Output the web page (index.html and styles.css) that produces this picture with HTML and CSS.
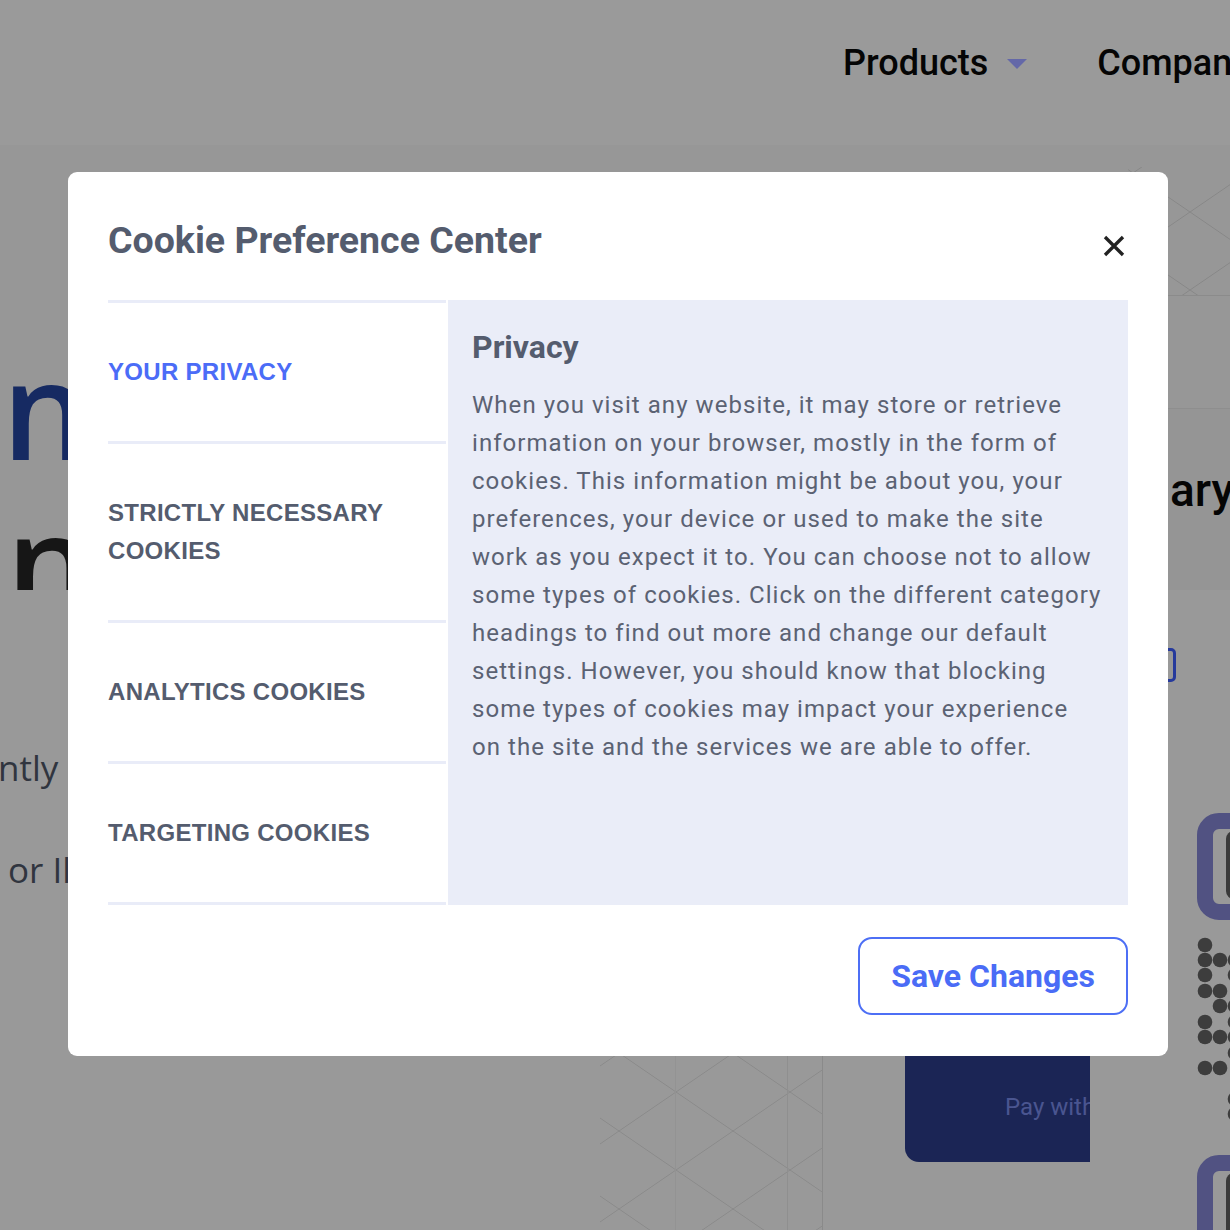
FILE: index.html
```html
<!DOCTYPE html>
<html lang="en">
<head>
<meta charset="utf-8">
<title>Cookie Preference Center</title>
<link rel="stylesheet" href="styles.css">
</head>
<body>
<div class="page" aria-hidden="true">
  <header class="site-header">
    <nav class="main-nav">
      <span class="nav-item">Products<span class="caret"></span></span>
      <span class="nav-item">Company</span>
    </nav>
  </header>

  <section class="hero">
    <div class="hero-copy">
      <h1 class="hero-title"><span class="hero-line accent">in</span><span class="hero-line dark">en</span></h1>
    </div>
    <div class="hero-aside">
      <div class="aside-pattern">
        <svg width="102" height="150" viewBox="0 0 102 150">
          <defs>
            <pattern id="latticeTop" patternUnits="userSpaceOnUse" width="114" height="78" patternTransform="translate(62 67)">
              <path d="M0 0 L114 78 M0 78 L114 0" stroke="#878787" stroke-width="1" fill="none"/>
            </pattern>
          </defs>
          <rect x="0" y="22" width="102" height="128" fill="url(#latticeTop)"/>
        </svg>
      </div>
      <div class="aside-band"></div>
      <div class="aside-title">ary</div>
    </div>
  </section>

  <section class="lower">
    <div class="lower-copy">
      <p class="lower-line">ntly</p>
      <p class="lower-line indent">or Il</p>
    </div>
    <div class="lattice">
      <svg width="223" height="240" viewBox="0 0 223 240">
        <defs>
          <pattern id="latticeBottom" patternUnits="userSpaceOnUse" width="114" height="78" patternTransform="translate(76 24)">
            <path d="M0 0 L114 78 M0 78 L114 0" stroke="#8a8a8a" stroke-width="1" fill="none"/>
          </pattern>
        </defs>
        <rect x="0" y="0" width="223" height="240" fill="url(#latticeBottom)"/>
        <line x1="75.5" y1="0" x2="75.5" y2="240" stroke="#939393" stroke-width="1"/>
        <line x1="187.5" y1="0" x2="187.5" y2="240" stroke="#8f8f8f" stroke-width="1"/>
      </svg>
    </div>
    <div class="pay-card"><span class="pay-label">Pay with</span></div>
    <div class="decor">
      <div class="outline-chip"></div>
      <div class="purple-tile"><span class="tile-core"></span></div>
      <svg class="dots" width="40" height="190" viewBox="0 0 40 190">
        <g fill="#3d3d3d">
          <circle cx="8" cy="8" r="7.3"/>
          <circle cx="8" cy="23" r="7.3"/>
          <circle cx="8" cy="38" r="7.3"/>
          <circle cx="8" cy="54" r="7.3"/>
          <circle cx="8" cy="85" r="7.3"/>
          <circle cx="8" cy="100" r="7.3"/>
          <circle cx="8" cy="131" r="7.3"/>
          <circle cx="23" cy="23" r="7.3"/>
          <circle cx="23" cy="54" r="7.3"/>
          <circle cx="23" cy="69" r="7.3"/>
          <circle cx="23" cy="100" r="7.3"/>
          <circle cx="23" cy="131" r="7.3"/>
          <circle cx="38" cy="23" r="7.3"/>
          <circle cx="38" cy="38" r="7.3"/>
          <circle cx="38" cy="69" r="7.3"/>
          <circle cx="38" cy="85" r="7.3"/>
          <circle cx="38" cy="100" r="7.3"/>
          <circle cx="38" cy="116" r="7.3"/>
          <circle cx="38" cy="162" r="7.3"/>
          <circle cx="38" cy="177" r="7.3"/>
        </g>
      </svg>
      <div class="purple-tile"><span class="tile-core"></span></div>
    </div>
  </section>
</div>

<div class="backdrop">
  <div class="modal" role="dialog" aria-labelledby="cpc-title">
    <div class="modal-header">
      <h2 class="modal-title" id="cpc-title">Cookie Preference Center</h2>
      <button class="close-btn" type="button" aria-label="Close">
        <svg width="22" height="22" viewBox="0 0 22 22">
          <path d="M2 2 L20 20 M20 2 L2 20" stroke="#222" stroke-width="3.3" fill="none"/>
        </svg>
      </button>
    </div>
    <div class="modal-body">
      <ul class="tab-list">
        <li class="tab active">YOUR PRIVACY</li>
        <li class="tab">STRICTLY NECESSARY COOKIES</li>
        <li class="tab">ANALYTICS COOKIES</li>
        <li class="tab">TARGETING COOKIES</li>
      </ul>
      <div class="tab-panel">
        <h3 class="panel-title">Privacy</h3>
        <p class="panel-text">When you visit any website, it may store or retrieve information on your browser, mostly in the form of cookies. This information might be about you, your preferences, your device or used to make the site work as you expect it to. You can choose not to allow some types of cookies. Click on the different category headings to find out more and change our default settings. However, you should know that blocking some types of cookies may impact your experience on the site and the services we are able to offer.</p>
      </div>
    </div>
    <div class="modal-footer">
      <button class="save-btn" type="button">Save Changes</button>
    </div>
  </div>
</div>
</body>
</html>
```

FILE: styles.css
```css
* { box-sizing: border-box; }

html, body {
  margin: 0;
  padding: 0;
}

body {
  width: 1230px;
  height: 1230px;
  overflow: hidden;
  background: #999999;
  font-family: Roboto, "Liberation Sans", sans-serif;
}

/* ---------- background page (already dimmed) ---------- */
.page {
  width: 1230px;
  height: 1230px;
  overflow: hidden;
}

.site-header {
  height: 145px;
  background: #9a9a9a;
  display: flex;
  align-items: center;
  padding: 0 0 20px 843px;
  overflow: hidden;
}

.main-nav {
  display: flex;
  align-items: center;
  gap: 70px;
  white-space: nowrap;
}

.nav-item {
  font-family: Roboto, sans-serif;
  font-weight: 500;
  font-size: 36px;
  color: #050505;
  display: inline-flex;
  align-items: center;
}

.caret {
  display: inline-block;
  margin-left: 19px;
  margin-top: 3px;
  width: 0;
  height: 0;
  border-left: 10.5px solid transparent;
  border-right: 10.5px solid transparent;
  border-top: 10px solid #6468a8;
}

.hero {
  height: 445px;
  background: #979797;
  display: grid;
  grid-template-columns: 1fr 102px;
}

.hero-copy {
  padding-top: 190px;
  overflow: hidden;
}

.hero-title {
  margin: 0;
  font-family: "Open Sans", sans-serif;
  font-weight: 600;
  font-size: 136px;
  line-height: 145px;
}

.hero-line {
  display: block;
  white-space: nowrap;
}

.hero-line.accent {
  color: #162a62;
  margin-left: -36px;
}

.hero-line.dark {
  color: #161616;
  margin-left: -72px;
  margin-top: 8px;
}

.hero-aside {
  display: flex;
  flex-direction: column;
}

.aside-pattern {
  height: 151px;
  border-bottom: 1px solid #8b8b8b;
}

.aside-pattern svg { display: block; }

.aside-band {
  height: 113px;
  border-bottom: 1px solid #8e8e8e;
}

.aside-title {
  flex: 1;
  background: #959595;
  padding: 53px 0 0 42px;
  font-family: Roboto, sans-serif;
  font-weight: 500;
  font-size: 46px;
  line-height: 56px;
  color: #050505;
  white-space: nowrap;
  overflow: hidden;
}

.lower {
  height: 640px;
  display: grid;
  grid-template-columns: 600px 223px 82px 185px 140px;
}

.lower-copy {
  grid-column: 1;
  padding-top: 127px;
  overflow: hidden;
}

.lower-line {
  margin: 0;
  font-family: "Open Sans", sans-serif;
  font-size: 35px;
  line-height: 102px;
  color: #30353f;
  white-space: nowrap;
  margin-left: -2px;
}

.lower-line.indent { margin-left: 8px; }

.lattice {
  grid-column: 2;
  align-self: end;
  border-right: 1px solid #8a8a8a;
  height: 240px;
}

.lattice svg { display: block; }

.pay-card {
  grid-column: 4;
  align-self: end;
  margin-bottom: 68px;
  height: 220px;
  background: #1b2555;
  border-radius: 0 0 0 14px;
  overflow: hidden;
  display: flex;
  align-items: flex-end;
  padding: 0 0 40px 100px;
}

.pay-label {
  font-family: Roboto, sans-serif;
  font-size: 24px;
  line-height: 30px;
  color: #4a5590;
  white-space: nowrap;
}

.decor {
  grid-column: 5;
  display: flex;
  flex-direction: column;
  align-items: flex-start;
  overflow: hidden;
}

.outline-chip {
  margin: 58px 0 0 40px;
  width: 46px;
  height: 34px;
  flex-shrink: 0;
  border: 3px solid #263a9c;
  border-radius: 5px;
}

.purple-tile {
  margin: 131px 0 0 107px;
  width: 110px;
  height: 107px;
  flex-shrink: 0;
  border: 16px solid #515282;
  border-radius: 22px;
  padding: 2px 0 0 13px;
}

.tile-core {
  display: block;
  width: 30px;
  height: 68px;
  background: #3a3a3a;
  border-radius: 8px;
}

.dots {
  display: block;
  flex-shrink: 0;
  margin: 17px 0 0 107px;
}

.dots + .purple-tile { margin-top: 28px; }

/* ---------- modal ---------- */
.backdrop {
  position: fixed;
  inset: 0;
  padding: 172px 0 0 68px;
}

.modal {
  width: 1100px;
  background: #ffffff;
  border-radius: 9px;
  padding: 40px 40px 41px;
}

.modal-header {
  display: flex;
  align-items: center;
  justify-content: space-between;
  margin-bottom: 32px;
}

.modal-title {
  margin: 0;
  font-family: Roboto, sans-serif;
  font-weight: 700;
  font-size: 37.5px;
  line-height: 56px;
  color: #545c6e;
}

.close-btn {
  width: 28px;
  height: 28px;
  margin-top: 12px;
  padding: 0;
  border: 0;
  background: transparent;
  display: flex;
  align-items: center;
  justify-content: center;
}

.close-btn svg { display: block; }

.modal-body {
  display: flex;
}

.tab-list {
  list-style: none;
  margin: 0 2px 0 0;
  padding: 0;
  width: 338px;
  flex-shrink: 0;
  border-top: 3px solid #e9ecf8;
}

.tab {
  padding: 50px 0;
  border-bottom: 3px solid #e9ecf8;
  font-family: "Liberation Sans", Arial, sans-serif;
  font-weight: 700;
  font-size: 24px;
  line-height: 38px;
  letter-spacing: 0.3px;
  color: #545c6e;
}

.tab.active { color: #4b6cf7; }

.tab-panel {
  flex: 1;
  background: #eaedf8;
  padding: 28px 25px 24px 24px;
}

.panel-title {
  margin: 0 0 20px;
  font-family: Roboto, sans-serif;
  font-weight: 700;
  font-size: 32px;
  line-height: 38px;
  color: #545c6e;
}

.panel-text {
  margin: 0;
  font-family: Roboto, sans-serif;
  font-weight: 400;
  font-size: 24px;
  line-height: 38px;
  letter-spacing: 1.05px;
  color: #5b6273;
}

.modal-footer {
  display: flex;
  justify-content: flex-end;
  margin-top: 32px;
}

.save-btn {
  border: 2px solid #4d6ff5;
  border-radius: 14px;
  background: #ffffff;
  color: #4a6cf6;
  font-family: Roboto, sans-serif;
  font-weight: 700;
  font-size: 32px;
  line-height: 38px;
  padding: 18px 31px;
}
```
